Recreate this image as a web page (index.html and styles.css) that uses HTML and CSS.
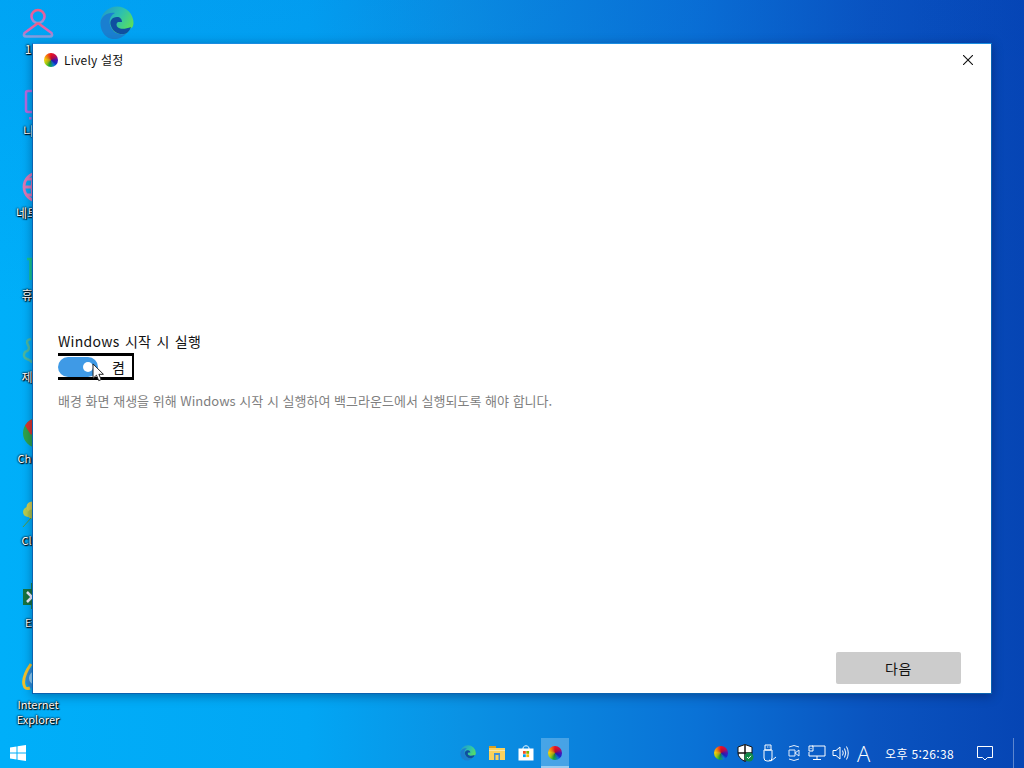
FILE: index.html
```html
<!DOCTYPE html>
<html lang="ko">
<head>
<meta charset="utf-8">
<title>Lively 설정</title>
<link rel="stylesheet" href="styles.css">
</head>
<body>
<div class="desktop">
  <div class="icons icons-main">
    <div class="icon">
      <svg class="glyph" viewBox="0 0 32 32"><defs><linearGradient id="pk" x1="0" y1="0" x2="0" y2="1"><stop offset="0" stop-color="#ee5f86"/><stop offset=".6" stop-color="#de62b8"/><stop offset="1" stop-color="#80a0e0"/></linearGradient></defs><circle cx="16" cy="9.500" r="6.500" fill="none" stroke="url(#pk)" stroke-width="2.600"/><path d="M16 16L2.500 26Q1 29.500 4 29.500H28Q31 29.500 29.500 26L16 16" fill="none" stroke="url(#pk)" stroke-width="2.600"/></svg>
      <span class="label">1111</span>
    </div>
    <div class="icon">
      <svg class="glyph" viewBox="0 0 32 32"><rect x="4" y="2" width="26" height="21" rx="2" fill="none" stroke="#b56ae0" stroke-width="2.500"/><rect x="7" y="28" width="2.500" height="2.500" fill="#b56ae0"/></svg>
      <span class="label">나 PC</span>
    </div>
    <div class="icon">
      <svg class="glyph" viewBox="0 0 32 32"><g fill="none" stroke="#dc78b4" stroke-width="2.800"><circle cx="16" cy="16" r="14"/><ellipse cx="16" cy="16" rx="6" ry="14"/><path d="M2 16H30M5 8H27M5 24H27"/></g></svg>
      <span class="label">네트워크</span>
    </div>
    <div class="icon">
      <svg class="glyph" viewBox="0 0 32 32"><path d="M5 6H10M8.500 6V27" fill="none" stroke="#18c98a" stroke-width="2.500"/></svg>
      <span class="label">휴지통</span>
    </div>
    <div class="icon">
      <svg class="glyph" viewBox="0 0 32 32"><path d="M9 4Q3 5 6 10T3 17Q0 22 5 24T10 28" fill="none" stroke="#4cb8a0" stroke-width="2.500"/></svg>
      <span class="label">제어판</span>
    </div>
    <div class="icon">
      <svg class="glyph" viewBox="0 0 32 32"><circle cx="16" cy="16" r="15" fill="#2fa34a"/><path d="M16 1A15 15 0 0 0 3 8.500L9 18 16 10H29.500A15 15 0 0 0 16 1Z" fill="#d9362e"/></svg>
      <span class="label label-latin">Chrome</span>
    </div>
    <div class="icon">
      <svg class="glyph" viewBox="0 0 32 32"><circle cx="6" cy="13" r="5" fill="#b9cc4e"/><circle cx="10" cy="8" r="5.500" fill="#d2cf52"/><circle cx="10" cy="15" r="4.500" fill="#a9c24c"/><path d="M9 19L1 28" stroke="#5c9a3c" stroke-width="1"/></svg>
      <span class="label label-latin">Clover</span>
    </div>
    <div class="icon">
      <svg class="glyph" viewBox="0 0 32 32"><rect x="9" y="2" width="20" height="26" fill="#1c8a4e"/><rect x="1" y="8" width="18" height="16" fill="#17723f"/><path d="M5 11L10 16 5 21" stroke="#eef" stroke-width="2.500" fill="none"/></svg>
      <span class="label label-latin">Excel</span>
    </div>
    <div class="icon">
      <svg class="glyph" viewBox="0 0 32 32"><circle cx="14" cy="15" r="9" fill="#8fd0f4" stroke="#2f8fd8" stroke-width="4"/><path d="M9 1Q0 14 2 22Q3 27 8 25" fill="none" stroke="#f3c32c" stroke-width="3"/></svg>
      <span class="label label-latin">Internet Explorer</span>
    </div>
  </div>
  <div class="icons icons-side">
    <div class="icon">
      <svg class="glyph-lg" viewBox="0 0 34 34"><defs><linearGradient id="eg" x1="0" y1="0" x2="1" y2=".6"><stop offset="0" stop-color="#1f94cf"/><stop offset=".55" stop-color="#2cc0b0"/><stop offset="1" stop-color="#5ce05a"/></linearGradient></defs><path d="M.5 17A16.500 16.500 0 0 1 33.500 17C33.500 20 32 22 31 22L26 28 7 31Z" fill="url(#eg)"/><path d="M.5 17C1 10 8 6 15 7 9 10 8 17 12 23 15 28 21 29.500 27 27 22 33 13 35 7 31 3 28 .5 23 .5 17Z" fill="#1a7fd0"/><path d="M11 20C9 15 12 11 17 11 20 11 22 13 22 16H18C16 17 16 20 18 21.500 21 23.500 26 23 31 21 30 24 28 26.500 26 27.500 19 29.500 13 26 11 20Z" fill="#0f4fa0"/></svg>
    </div>
  </div>

  <section class="window">
    <header class="titlebar">
      <span class="logo"></span>
      <span class="title">Lively 설정</span>
      <svg class="close" viewBox="0 0 10 10"><path d="M0 0L10 10M10 0L0 10" stroke="#111" stroke-width="1.100" fill="none"/></svg>
    </header>
    <div class="content">
      <div class="setting">
        <div class="setting-name">Windows 시작 시 실행</div>
        <div class="toggle">
          <span class="pill"><span class="knob"></span></span>
          <span class="state">켬</span>
          <svg class="cursor" viewBox="0 0 13 21"><path d="M1 1V17L4.800 13.500 7.300 19.500 10 18.300 7.500 12.500H12.500Z" fill="#fff" stroke="#111" stroke-width="1"/></svg>
        </div>
        <div class="hint">배경 화면 재생을 위해 Windows 시작 시 실행하여 백그라운드에서 실행되도록 해야 합니다.</div>
      </div>
    </div>
    <footer class="actions">
      <button class="next">다음</button>
    </footer>
  </section>

  <nav class="taskbar">
    <div class="start">
      <svg class="win" viewBox="0 0 16 16"><path d="M0 2.400L6.500 1.500V7.500H0ZM7.500 1.300L16 0V7.500H7.500ZM0 8.500H6.500V14.500L0 13.600ZM7.500 8.500H16V16L7.500 14.700Z" fill="#fff"/></svg>
    </div>
    <div class="apps">
      <div class="app">
        <svg class="tb-icon" viewBox="0 0 34 34"><path d="M.5 17A16.500 16.500 0 0 1 33.500 17C33.500 20 32 22 31 22L26 28 7 31Z" fill="url(#eg)"/><path d="M.5 17C1 10 8 6 15 7 9 10 8 17 12 23 15 28 21 29.500 27 27 22 33 13 35 7 31 3 28 .5 23 .5 17Z" fill="#1a7fd0"/><path d="M11 20C9 15 12 11 17 11 20 11 22 13 22 16H18C16 17 16 20 18 21.500 21 23.500 26 23 31 21 30 24 28 26.500 26 27.500 19 29.500 13 26 11 20Z" fill="#0f4fa0"/></svg>
      </div>
      <div class="app">
        <svg class="tb-icon" viewBox="0 0 16 16"><path d="M0 1H7V3H0Z" fill="#d8a020"/><path d="M0 3H16V15H0Z" fill="#fbd25c"/><path d="M0 5H16V6H0Z" fill="#f5e6a8"/><path d="M5 8H11V15H9.500V10H6.500V15H5Z" fill="#3f8ed8"/></svg>
      </div>
      <div class="app">
        <svg class="tb-icon" viewBox="0 0 16 16"><path d="M5 4V2.500Q8 -1 11 2.500V4" fill="none" stroke="#fff" stroke-width="1"/><rect x="0.500" y="3.500" width="15" height="12" fill="#fff"/><rect x="5" y="6" width="2.800" height="2.800" fill="#f25022"/><rect x="8.300" y="6" width="2.800" height="2.800" fill="#7fba00"/><rect x="5" y="9.300" width="2.800" height="2.800" fill="#00a4ef"/><rect x="8.300" y="9.300" width="2.800" height="2.800" fill="#ffb900"/></svg>
      </div>
      <div class="app app-active"><span class="logo"></span></div>
    </div>
    <div class="tray">
      <span class="logo tray-logo"></span>
      <svg class="tray-icon" viewBox="0 0 18 18"><path d="M9 .5L16 3V9Q16 14 9 17.500 2 14 2 9V3Z" fill="#fff" stroke="#111" stroke-width="1"/><path d="M9 1V17M2 9H16" stroke="#111" stroke-width="1.500"/><circle cx="13" cy="13" r="4.500" fill="#118a4a"/><path d="M11 13L12.500 14.500 15 11.800" stroke="#fff" fill="none"/></svg>
      <svg class="tray-icon" viewBox="0 0 18 18"><path d="M5 1H11V6H5ZM4 6H12V14Q12 17 9 17H7Q4 17 4 14ZM7 3H7.800M8.700 3H9.500M9 16L11 17 16 13" fill="none" stroke="#fff" stroke-width="1"/></svg>
      <svg class="tray-icon" viewBox="0 0 18 18"><path d="M5 3Q10 0 15 3M5 15Q10 18 15 15M5 6H11V12H5ZM11 9L15 6V12Z" fill="none" stroke="#e4eefc" stroke-width="1"/></svg>
      <svg class="tray-icon" viewBox="0 0 18 18"><path d="M4 2H17V12H1V8M9 12V15M5 15.500H13M1 2H5V7H1ZM3 5V4" fill="none" stroke="#fff" stroke-width="1"/></svg>
      <svg class="tray-icon" viewBox="0 0 18 18"><path d="M1 6.500H4L8 3V15L4 11.500H1ZM10.500 6.500Q12 9 10.500 11.500M12.500 4.500Q15 9 12.500 13.500M14.500 2.500Q18 9 14.500 15.500" fill="none" stroke="#fff" stroke-width="1"/></svg>
      <span class="ime">A</span>
      <span class="clock">오후 5:26:38</span>
      <svg class="notify" viewBox="0 0 16 15"><path d="M.5 .5H15.500V11.500H10.500L8 14 5.500 11.500H.5Z" fill="none" stroke="#fff" stroke-width="1"/></svg>
      <span class="show-desktop"></span>
    </div>
  </nav>
</div>
</body>
</html>
```
FILE: styles.css
```css
* { box-sizing: border-box; }
html, body { margin: 0; padding: 0; }
body {
  width: 1024px;
  height: 768px;
  overflow: hidden;
  font-family: "Noto Sans CJK KR", "Open Sans", sans-serif;
}
.desktop {
  position: relative;
  width: 1024px;
  height: 768px;
  display: flex;
  flex-direction: column;
  justify-content: flex-end;
  background:
    linear-gradient(180deg, rgba(0, 70, 200, .1) 0, rgba(0, 70, 200, 0) 40%),
    linear-gradient(90deg, #00aff9 0, #02a6f4 30%, #0a92e4 45%, #0a72d6 68%, #0a54c0 85%, #0645b4 100%);
}

/* desktop icons */
.icons { position: absolute; top: 0; display: flex; flex-direction: column; }
.icons-main { left: 0; width: 76px; }
.icons-side { left: 79px; width: 76px; }
.icon {
  height: 82px;
  padding-top: 7px;
  display: flex;
  flex-direction: column;
  align-items: center;
}
.icons-side .icon { padding-top: 6px; }
.glyph { width: 32px; height: 32px; flex: none; }
.glyph-lg { width: 34px; height: 34px; flex: none; }
.label {
  margin-top: 2px;
  color: #fff;
  font-size: 12px;
  line-height: 15px;
  text-align: center;
  text-shadow: 0 0 2px #000, 0 0 2px #000, 1px 1px 1px #000;
}
.label-latin { font-size: 11px; }

/* window */
.window {
  position: absolute;
  left: 32px;
  top: 43px;
  width: 960px;
  height: 651px;
  background: #fff;
  border: 1px solid #0a62b0;
  border-top-color: #1a8ce0;
  box-shadow: 0 2px 10px rgba(0, 0, 40, .35);
  display: flex;
  flex-direction: column;
}
.titlebar {
  height: 31px;
  flex: none;
  display: flex;
  align-items: center;
  padding: 0 18px 0 11px;
}
.logo {
  display: block;
  width: 14px;
  height: 14px;
  flex: none;
  border-radius: 50%;
  background:
    radial-gradient(circle, rgba(60, 0, 60, .35) 0, rgba(60, 0, 60, 0) 60%),
    conic-gradient(#ee1020 0, #c01050 50deg, #4a14b8 90deg, #1428c8 125deg, #0a78d8 150deg, #12a838 195deg, #a8d010 235deg, #f8d008 275deg, #f87010 320deg, #ee1020 360deg);
}
.title { margin-left: 6px; font-size: 12px; letter-spacing: .2px; color: #111; flex: 1; }
.close { width: 10px; height: 10px; flex: none; }
.content {
  flex: 1;
  display: flex;
  flex-direction: column;
  justify-content: flex-start;
  padding: 256px 25px 0;
}
.setting-name { font-size: 14px; line-height: 20px; letter-spacing: .3px; word-spacing: 1px; color: #111; }
.toggle {
  position: relative;
  margin-top: 2px;
  width: 76px;
  height: 27px;
  display: flex;
  align-items: center;
  border: solid #000;
  border-width: 3px 2px 3px 0;
}
.pill {
  width: 40px;
  height: 20px;
  border-radius: 10px;
  background: #3f9ae6;
  display: flex;
  align-items: center;
  justify-content: flex-end;
  padding-right: 5px;
}
.knob { width: 10px; height: 10px; border-radius: 50%; background: #fff; }
.state { margin-left: 14px; font-size: 14px; line-height: 20px; color: #111; }
.cursor { position: absolute; left: 34px; top: 7px; width: 12px; height: 19px; }
.hint { margin-top: 13px; font-size: 13px; line-height: 16px; letter-spacing: .01px; color: #808080; white-space: nowrap; }
.actions {
  flex: none;
  display: flex;
  justify-content: flex-end;
  padding: 0 30px 9px 0;
}
.next {
  width: 125px;
  height: 32px;
  border: 0;
  border-radius: 2px;
  background: #cccccc;
  color: #111;
  font: 14px "Noto Sans CJK KR", sans-serif;
  letter-spacing: .5px;
}

/* taskbar */
.taskbar {
  position: relative;
  height: 30px;
  display: flex;
  align-items: stretch;
}
.start { width: 36px; display: flex; align-items: center; padding-left: 10px; }
.win { width: 16px; height: 16px; }
.apps { margin-left: 417px; display: flex; }
.app { width: 29px; display: flex; align-items: center; justify-content: center; }
.tb-icon { width: 16px; height: 16px; }
.app-active {
  width: 28px;
  margin-left: 1px;
  background: rgba(255, 255, 255, .25);
  border-bottom: 2px solid rgba(255, 255, 255, .45);
  padding-top: 2px;
}
.tray { margin-left: auto; display: flex; align-items: center; color: #fff; }
.tray-logo { margin-right: 8px; }
.tray-icon { width: 18px; height: 18px; margin-right: 6px; flex: none; }
.ime { width: 15px; font: 300 22px/1 "Open Sans", sans-serif; text-align: center; }
.clock { margin-left: 14px; font-size: 12px; letter-spacing: .35px; width: 70px; white-space: nowrap; }
.notify { margin-left: 22px; width: 16px; height: 15px; }
.show-desktop { margin-left: 20px; margin-right: 10px; width: 1px; height: 30px; background: rgba(255, 255, 255, .35); }
```
